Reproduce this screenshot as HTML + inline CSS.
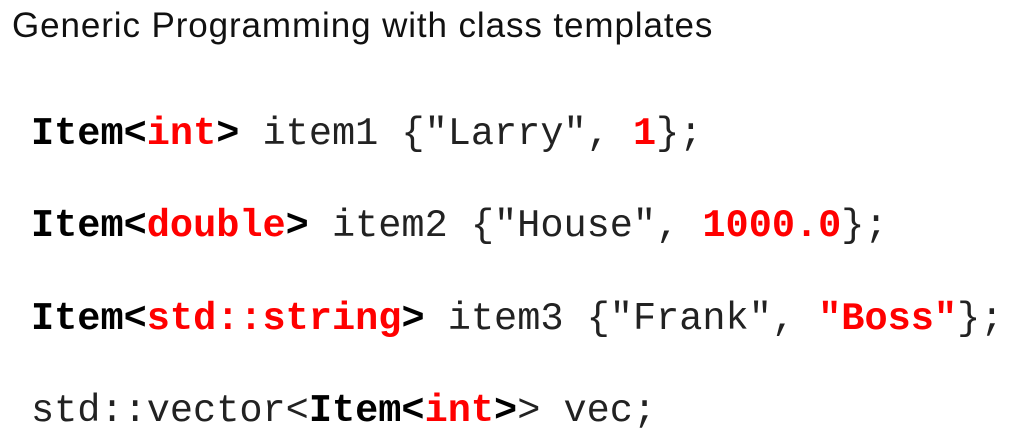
<!DOCTYPE html>
<html><head><meta charset="utf-8"><style>
html,body{margin:0;padding:0;background:#fff;width:1013px;height:439px;overflow:hidden;position:relative}
.t{position:absolute;left:12px;top:5px;font-family:"Liberation Sans",sans-serif;font-size:35px;letter-spacing:0.9px;color:#111;white-space:nowrap;line-height:42px}
.c{position:absolute;left:31px;font-family:"Liberation Mono",monospace;font-size:38.6px;color:#222;white-space:pre;line-height:46px}
b{font-weight:bold;color:#000}
.r{color:#f00;font-weight:bold}
</style></head><body>
<div class="t">Generic Programming with class templates</div>
<div class="c" style="top:111px"><b>Item&lt;</b><span class="r">int</span><b>&gt;</b> item1 {"Larry", <span class="r">1</span>};</div>
<div class="c" style="top:203px"><b>Item&lt;</b><span class="r">double</span><b>&gt;</b> item2 {"House", <span class="r">1000.0</span>};</div>
<div class="c" style="top:296px"><b>Item&lt;</b><span class="r">std::string</span><b>&gt;</b> item3 {"Frank", <span class="r">"Boss"</span>};</div>
<div class="c" style="top:388px">std::vector&lt;<b>Item&lt;</b><span class="r">int</span><b>&gt;</b>&gt; vec;</div>
</body></html>
